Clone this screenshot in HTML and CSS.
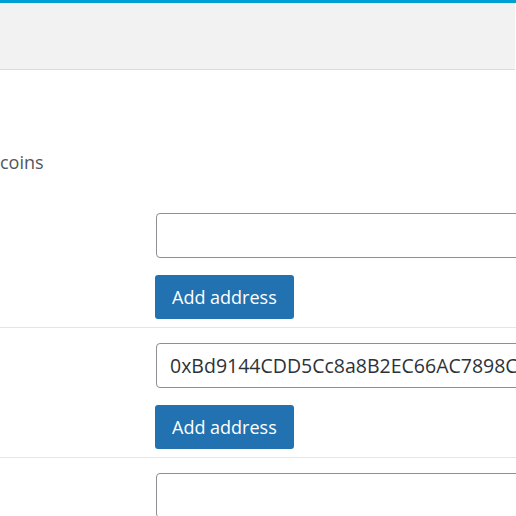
FILE: index.html
```html
<html>
	<head>
		<title>Addresses</title>
		<link rel="stylesheet" href="styles.css">
	</head>
	<body>
		<div id="topbar"></div>
		<div id="header"></div>
		<div id="content">
			<p class="description">coins</p>
			<div id="rows">
				<div class="row">
					<input type="text" class="address" value="">
					<button class="button">Add address</button>
				</div>
				<div class="row">
					<input type="text" class="address" value="0xBd9144CDD5Cc8a8B2EC66AC7898C0a6F15C5E3B1">
					<button class="button">Add address</button>
				</div>
				<div class="row">
					<input type="text" class="address" value="">
				</div>
			</div>
		</div>
	</body>
</html>
```
FILE: styles.css
```css
*{
	margin:0px;
	padding:0px;
	box-sizing:border-box;
}
html, body{
	width:516px;
	height:516px;
	overflow:hidden;
	background-color:#fff;
}
body{
	font-family:"Open Sans", "Liberation Sans", sans-serif;
	font-size:18px;
	color:#3c434a;
}
#topbar{
	height:3px;
	background-color:#00a0d2;
}
#header{
	height:67px;
	margin-right:1px;
	background-color:#f2f2f2;
	border-bottom:1px solid #dcdcde;
}
#content{
	padding-top:79px;
}
.description{
	line-height:27px;
	color:#50575e;
}
#rows{
	margin-top:37px;
}
.row{
	display:flex;
	flex-direction:column;
	align-items:flex-start;
	padding:0px 0px 8px 155px;
	border-bottom:1px solid #e5e5e5;
}
.row + .row{
	padding-top:15px;
}
.address{
	width:420px;
	height:45px;
	margin-left:1px;
	margin-bottom:17px;
	padding:0px 13px;
	border:1px solid #8c8f94;
	border-radius:4px;
	font-family:"Open Sans", "Liberation Sans", sans-serif;
	font-size:19.5px;
	color:#2c3338;
	background-color:#fff;
	outline:none;
}
.button{
	height:44px;
	padding:0px 17px 1px;
	border:none;
	border-radius:3px;
	background-color:#2271b1;
	color:#fff;
	font-family:"Open Sans", "Liberation Sans", sans-serif;
	font-size:18px;
}
```
